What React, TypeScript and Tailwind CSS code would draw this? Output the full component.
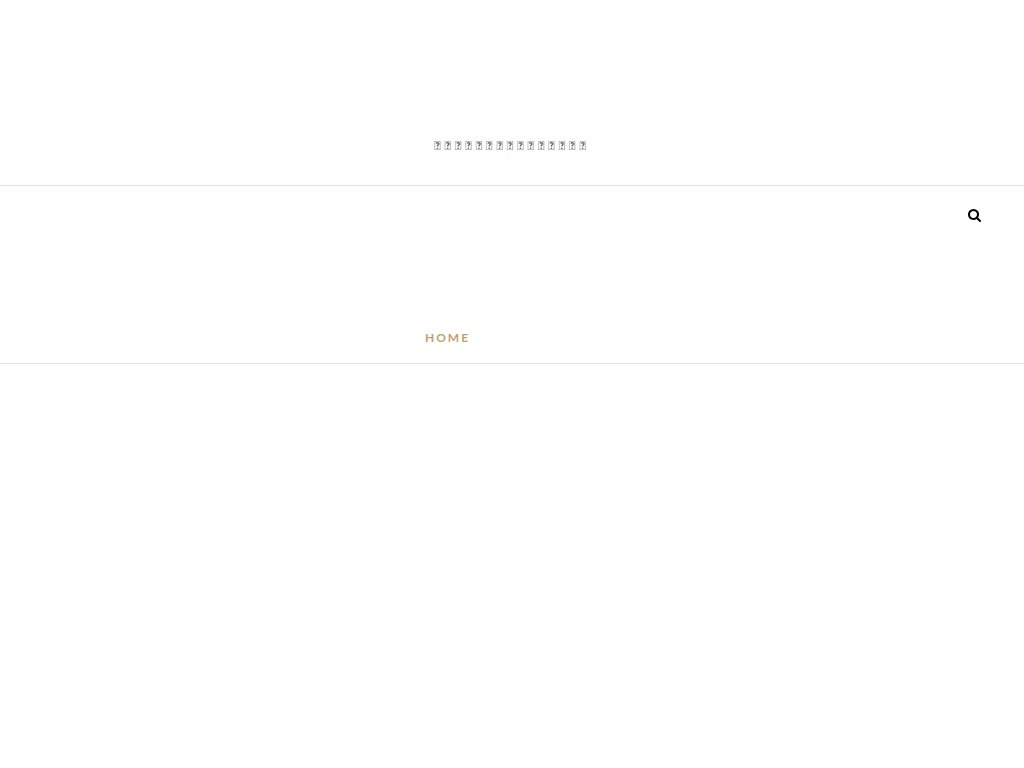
const tagline = "\uE83A".repeat(15);

function SearchIcon() {
  return (
    <svg viewBox="0 0 1664 1664" className="size-[13px]" fill="currentColor" aria-hidden="true">
      <path d="M1152 704q0-185-131.500-316.500t-316.500-131.500-316.500 131.500-131.500 316.500 131.500 316.500 316.500 131.500 316.500-131.500 131.500-316.500zm512 832q0 52-38 90t-90 38q-54 0-90-38l-343-342q-179 124-399 124-143 0-273.500-55.500t-225-150-150-225-55.500-273.500 55.500-273.500 150-225 225-150 273.500-55.500 273.500 55.500 225 150 150 225 55.500 273.500q0 220-124 399l343 343q37 37 37 90z" />
    </svg>
  );
}

export default function App() {
  return (
    <div className="font-['Lato',sans-serif] text-black">
      <header className="flex justify-center border-b border-[#e4e4e4] px-4 pt-34 pb-[29px]">
        <p className="text-[12px] leading-5 tracking-[4px] text-[#1c1c1c]">{tagline}</p>
      </header>
      <nav className="border-b border-[#e4e4e4] pt-5 pb-[15px]">
        <div className="flex justify-end px-[43px]">
          <button type="button" aria-label="Search" className="py-[3px]">
            <SearchIcon />
          </button>
        </div>
        <ul className="flex justify-center pt-[103px] pr-[129px]">
          <li className="flex">
            <a href="#" className="text-[12px] leading-5 font-bold tracking-[2px] text-[#c39f6e]">
              HOME
            </a>
          </li>
        </ul>
      </nav>
    </div>
  );
}
